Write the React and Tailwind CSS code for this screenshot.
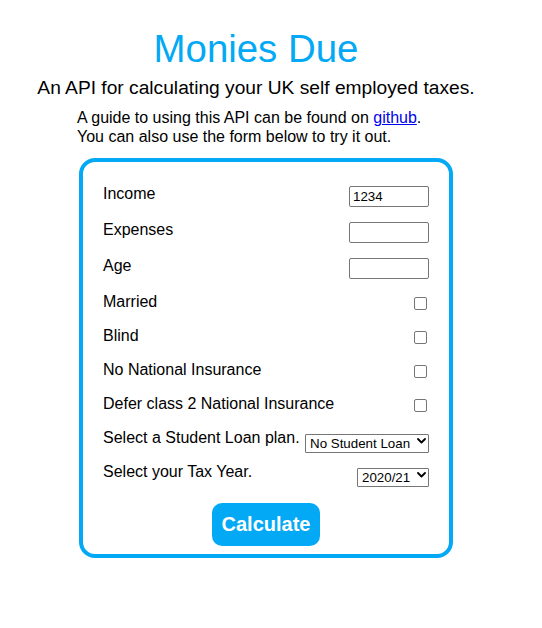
import { useState } from "react";

const Chevron = () => (
  <svg
    className="pointer-events-none absolute right-[3px] top-[7px]"
    width="9"
    height="6"
    viewBox="0 0 9 6"
    fill="none"
  >
    <path d="M1 1l3.5 3.5L8 1" stroke="#000" strokeWidth="1.8" strokeLinecap="round" strokeLinejoin="round" />
  </svg>
);

const TextRow = ({ label, value, onChange }) => (
  <div className="flex h-[36px] items-start justify-between">
    <label className="text-[16px] leading-[18px]">{label}</label>
    <input
      type="text"
      value={value}
      onChange={(e) => onChange(e.target.value)}
      className="mt-[1px] h-[21px] w-[80px] rounded-[2px] border border-[#767676] bg-white px-[3px] text-[13.33px] leading-[17px] text-black outline-none"
    />
  </div>
);

const CheckRow = ({ label, checked, onChange }) => (
  <div className="flex h-[34px] items-start justify-between">
    <label className="text-[16px] leading-[18px]">{label}</label>
    <input
      type="checkbox"
      checked={checked}
      onChange={(e) => onChange(e.target.checked)}
      className="mt-[4px] mr-[2px] h-[13px] w-[13px] appearance-none rounded-[2px] border border-[#767676] bg-white"
    />
  </div>
);

const SelectRow = ({ label, value, options, width, onChange }) => (
  <div className="flex h-[34px] items-start justify-between">
    <label className="text-[16px] leading-[18px]">{label}</label>
    <div className="relative mt-[1.5px]">
      <select
        value={value}
        onChange={(e) => onChange(e.target.value)}
        className={`h-[19px] ${width} appearance-none rounded-[1px] border border-[#767676] bg-white pl-[4px] pr-[14px] text-[13.33px] leading-[17px] text-black outline-none`}
      >
        {options.map((o) => (
          <option key={o}>{o}</option>
        ))}
      </select>
      <Chevron />
    </div>
  </div>
);

export default function App() {
  const [income, setIncome] = useState("1234");
  const [expenses, setExpenses] = useState("");
  const [age, setAge] = useState("");
  const [flags, setFlags] = useState({ married: false, blind: false, noNi: false, defer: false });
  const [loan, setLoan] = useState("No Student Loan");
  const [year, setYear] = useState("2020/21");

  const setFlag = (key) => (v) => setFlags((f) => ({ ...f, [key]: v }));

  return (
    <div className="w-[512px] pb-[40px] font-['Liberation_Sans',Arial,sans-serif] text-black">
      <h1 className="pt-[27px] text-center text-[38.4px] leading-[44px] text-[#03a9f4]">Monies Due</h1>
      <h2 className="mt-[5.5px] text-center text-[19.2px] leading-[22px]">
        An API for calculating your UK self employed taxes.
      </h2>

      <p className="ml-[77px] mt-[9.5px] text-[16px] leading-[19px]">
        A guide to using this API can be found on{" "}
        <a href="#" className="text-[#0000ee] underline">
          github
        </a>
        .
        <br />
        You can also use the form below to try it out.
      </p>

      <form
        onSubmit={(e) => e.preventDefault()}
        className="ml-[79px] mt-[12px] flex h-[400px] w-[374px] flex-col rounded-[16px] border-4 border-[#03a9f4] px-5 pt-[23px]"
      >
        <TextRow label="Income" value={income} onChange={setIncome} />
        <TextRow label="Expenses" value={expenses} onChange={setExpenses} />
        <TextRow label="Age" value={age} onChange={setAge} />
        <CheckRow label="Married" checked={flags.married} onChange={setFlag("married")} />
        <CheckRow label="Blind" checked={flags.blind} onChange={setFlag("blind")} />
        <CheckRow label="No National Insurance" checked={flags.noNi} onChange={setFlag("noNi")} />
        <CheckRow label="Defer class 2 National Insurance" checked={flags.defer} onChange={setFlag("defer")} />
        <SelectRow
          label="Select a Student Loan plan."
          value={loan}
          width="w-[124px]"
          options={["No Student Loan", "Plan 1", "Plan 2", "Plan 4"]}
          onChange={setLoan}
        />
        <SelectRow
          label="Select your Tax Year."
          value={year}
          width="w-[72px]"
          options={["2020/21", "2019/20", "2018/19"]}
          onChange={setYear}
        />
        <div className="mt-[5.5px] flex justify-center">
          <button
            type="submit"
            className="h-[43px] w-[108px] rounded-[10px] bg-[#03a9f4] text-[20px] font-bold leading-[23px] text-white"
          >
            Calculate
          </button>
        </div>
      </form>
    </div>
  );
}
